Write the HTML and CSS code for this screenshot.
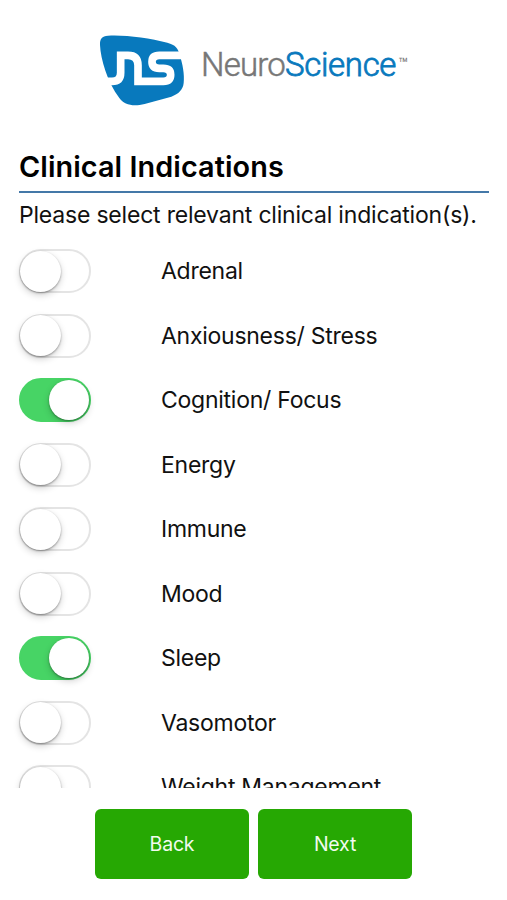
FILE: index.html
```html
<!DOCTYPE html>
<html lang="en">
<head>
  <meta charset="UTF-8" />
  <meta name="viewport" content="width=device-width, initial-scale=1.0"/>
  <title>Clinical Indications</title>
  <link rel="stylesheet" href="styles.css">
</head>
<body>
  <div class="page">
    <div class="logo">
      <svg class="logo-mark" viewBox="0 0 330 270">
        <path fill="#0879bd" d="M54 32 C105 29 176 39 232 53 C257 60 264 69 269 89 C278 117 284 148 281 174 C279 194 266 207 244 215 L164 237 C128 246 103 239 88 219 C52 172 32 102 30 60 C29 42 36 33 54 32 Z"/>
        <path class="mark-line" d="M38 169 H66 Q92 169 92 143 V91 H114 Q144 91 144 121 V169 H220 Q242 169 242 149.500 Q242 130 220 130 H208 Q186 130 186 110.500 Q186 91 208 91 H290"/>
      </svg>
      <div class="logo-text"><span class="neuro">Neuro</span><span class="science">Science</span><span class="tm">™</span></div>
    </div>

    <h2>Clinical Indications</h2>
    <p class="intro">Please select relevant clinical indication(s).</p>

    <div class="list">
      <label class="row"><input type="checkbox" class="switch"><span>Adrenal</span></label>
      <label class="row"><input type="checkbox" class="switch"><span>Anxiousness/ Stress</span></label>
      <label class="row"><input type="checkbox" class="switch" checked><span>Cognition/ Focus</span></label>
      <label class="row"><input type="checkbox" class="switch"><span>Energy</span></label>
      <label class="row"><input type="checkbox" class="switch"><span>Immune</span></label>
      <label class="row"><input type="checkbox" class="switch"><span>Mood</span></label>
      <label class="row"><input type="checkbox" class="switch" checked><span>Sleep</span></label>
      <label class="row"><input type="checkbox" class="switch"><span>Vasomotor</span></label>
      <label class="row"><input type="checkbox" class="switch"><span>Weight Management</span></label>
    </div>

    <div class="buttons">
      <button>Back</button>
      <button>Next</button>
    </div>
  </div>
</body>
</html>
```

FILE: styles.css
```css
body {
  margin: 0;
  background-color: #fff;
  color: #111;
  font-family: Inter, "Liberation Sans", sans-serif;
}
.page {
  box-sizing: border-box;
  height: 900px;
  padding: 25px 18px 0 19px;
  overflow: hidden;
}
.logo {
  display: flex;
  height: 90px;
  padding-left: 71px;
}
.logo-mark {
  width: 110px;
  height: 90px;
}
.mark-line {
  fill: none;
  stroke: #fff;
  stroke-width: 23;
}
.logo-text {
  display: flex;
  font-family: Roboto, sans-serif;
  font-size: 33px;
  font-weight: 300;
  line-height: 40px;
  letter-spacing: -0.45px;
  padding-top: 20px;
  white-space: nowrap;
}
.neuro {
  color: #777;
  letter-spacing: -0.8px;
  margin-left: 1px;
  -webkit-text-stroke: 0.5px #777;
}
.science {
  color: #0879bd;
  letter-spacing: -0.3px;
  -webkit-text-stroke: 0.8px #0879bd;
}
.tm {
  margin-left: 2px;
  color: #777;
  font-size: 16px;
  font-weight: 400;
  line-height: 38px;
}
h2 {
  box-sizing: border-box;
  height: 78px;
  margin: 0;
  padding-top: 34px;
  border-bottom: 2px solid #4478a8;
  color: #000;
  font-size: 28.8px;
  font-weight: 600;
  line-height: 36px;
  letter-spacing: 0.08px;
  white-space: nowrap;
}
.intro {
  height: 46px;
  margin: 0;
  padding-top: 6px;
  box-sizing: border-box;
  font-size: 23px;
  line-height: 32px;
  letter-spacing: -0.2px;
  white-space: nowrap;
}
.list {
  height: 549px;
  margin-left: -19px;
  padding-left: 19px;
  overflow: hidden;
}
.row {
  display: flex;
  align-items: center;
  gap: 70px;
  height: 64.5px;
  font-size: 23px;
  letter-spacing: -0.26px;
  white-space: nowrap;
}
.switch {
  appearance: none;
  display: flex;
  align-items: center;
  box-sizing: border-box;
  width: 72px;
  height: 44px;
  margin: 0;
  border: 2px solid #e4e4e4;
  border-radius: 22px;
  background: #fff;
}
.switch::before {
  content: "";
  width: 41px;
  height: 41px;
  margin: 0 -1px;
  border-radius: 50%;
  background: #fff;
  box-shadow: 0 3px 7px rgba(0,0,0,0.18), 0 1px 2px rgba(0,0,0,0.35);
}
.switch:checked {
  justify-content: flex-end;
  border-color: #47d465;
  background: #47d465;
}
.switch:checked::before {
  width: 40px;
  height: 40px;
  margin-right: 0;
}
.buttons {
  display: flex;
  gap: 9px;
  padding: 21px 0 0 76px;
}
button {
  width: 154px;
  height: 70px;
  padding: 0;
  border: none;
  border-radius: 6px;
  background: #26a803;
  color: #f2fbef;
  font-family: inherit;
  font-size: 19.5px;
  letter-spacing: -0.2px;
}
```
